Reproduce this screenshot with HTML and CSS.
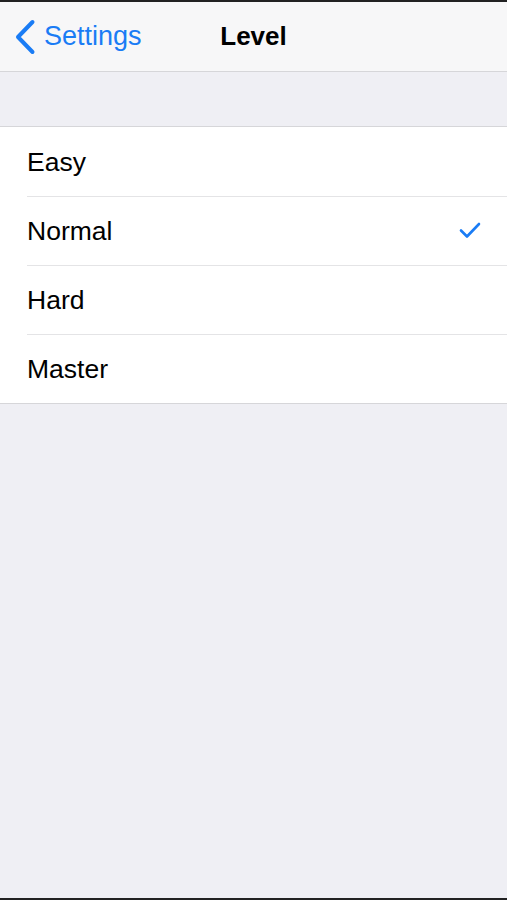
FILE: index.html
```html
<!DOCTYPE html>
<html lang="en">
<head>
  <meta charset="UTF-8">
  <meta name="viewport" content="width=device-width, initial-scale=1.0">
  <title>Level</title>
  <link rel="stylesheet" href="styles.css">
</head>
<body>
  <div class="screen">
    <header class="nav-bar">
      <a class="back" href="#">
        <svg width="22" height="36" viewBox="0 0 22 36">
          <path d="M18.5 3 L4 18 L18.5 33" fill="none" stroke="#1a7cf5" stroke-width="4" stroke-linecap="round" stroke-linejoin="round"/>
        </svg>
        <span>Settings</span>
      </a>
      <h1 class="title">Level</h1>
    </header>

    <div class="spacer"></div>

    <ul class="list">
      <li class="row"><span>Easy</span></li>
      <li class="row selected">
        <span>Normal</span>
        <svg class="check" width="22" height="18" viewBox="0 0 22 18">
          <path d="M2 9.5 L8 15.5 L20 3" fill="none" stroke="#1a7cf5" stroke-width="2.6" stroke-linecap="round" stroke-linejoin="round"/>
        </svg>
      </li>
      <li class="row"><span>Hard</span></li>
      <li class="row"><span>Master</span></li>
    </ul>
  </div>
</body>
</html>
```

FILE: styles.css
```css
body {
  margin: 0;
  background: #222;
  font-family: "Liberation Sans", Arial, sans-serif;
}

.screen {
  height: 896px;
  margin-top: 2px;
  background: #efeff4;
  display: flex;
  flex-direction: column;
}

.nav-bar {
  position: relative;
  height: 69px;
  background: #f7f7f8;
  border-bottom: 1px solid #d6d6d9;
  display: flex;
  align-items: center;
}

.back {
  display: flex;
  align-items: center;
  gap: 8px;
  padding-left: 14px;
  color: #1a7cf5;
  text-decoration: none;
  font-size: 27px;
}

.title {
  position: absolute;
  left: 0;
  right: 0;
  top: 0;
  margin: 0;
  line-height: 69px;
  text-align: center;
  font-size: 26px;
  font-weight: bold;
  color: #000;
  pointer-events: none;
}

.spacer {
  height: 54px;
  border-bottom: 1px solid #d6d6d9;
}

.list {
  list-style: none;
  margin: 0;
  padding: 1px 0 0 27px;
  background: #fff;
  border-bottom: 1px solid #d6d6d9;
}

.row {
  height: 68px;
  display: flex;
  align-items: center;
  justify-content: space-between;
  padding-right: 26px;
  font-size: 26.5px;
  color: #000;
  border-bottom: 1px solid #e4e4e6;
}

.row:last-child {
  border-bottom: none;
}

.check {
  margin-top: -2px;
}
```
